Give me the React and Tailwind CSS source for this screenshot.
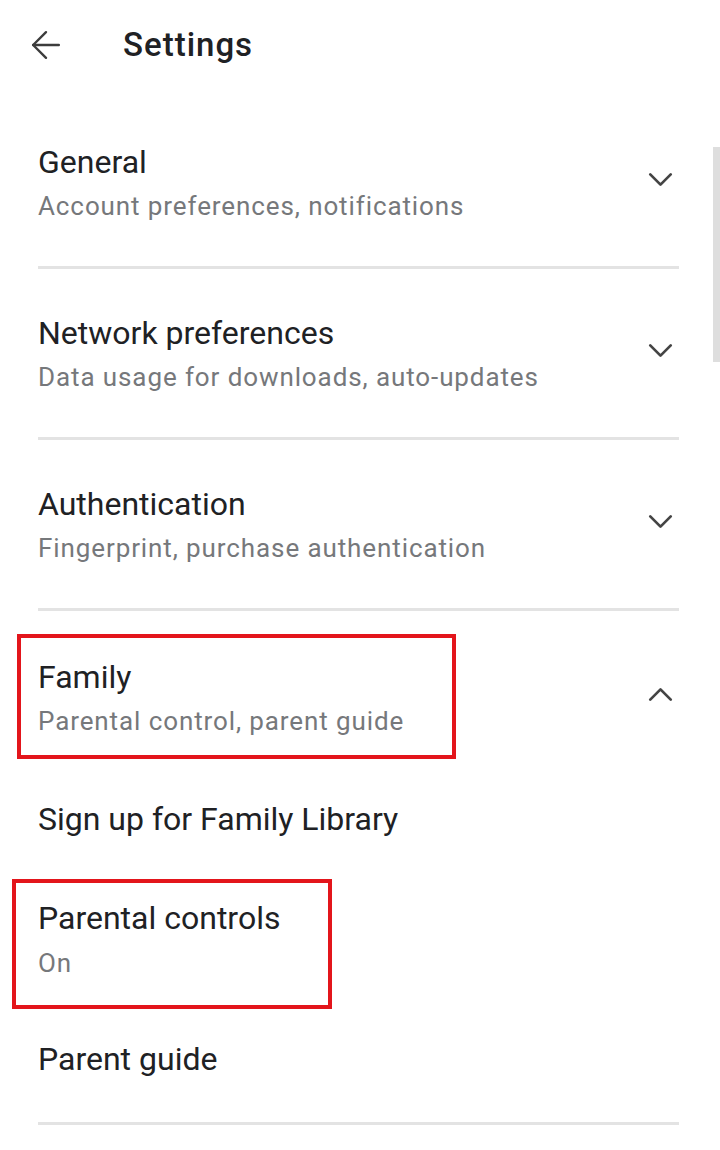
import { ArrowLeft, ChevronDown, ChevronUp } from 'lucide-react';

const SECTIONS = [
  { title: 'General', subtitle: 'Account preferences, notifications' },
  { title: 'Network preferences', subtitle: 'Data usage for downloads, auto-updates' },
  { title: 'Authentication', subtitle: 'Fingerprint, purchase authentication' },
];

const titleCls = 'text-[32px] leading-[40px] text-[#202124]';
const subCls = 'text-[26px] leading-[34px] tracking-[0.9px] text-[#76787b]';

function Divider() {
  return <div className="h-[3px] bg-[#e3e3e3]" />;
}

function SectionRow({ title, subtitle, open }) {
  return (
    <div className="flex items-center justify-between">
      <div>
        <div className={titleCls}>{title}</div>
        <div className={`mt-[7px] ${subCls}`}>{subtitle}</div>
      </div>
      <div className="-mr-[2px] -mt-[6px] text-[#444]">
        {open ? <ChevronUp size={41} strokeWidth={1.6} /> : <ChevronDown size={41} strokeWidth={1.6} />}
      </div>
    </div>
  );
}

export default function App() {
  return (
    <div
      className="relative w-[720px] h-[1150px] overflow-hidden bg-white"
      style={{ fontFamily: 'Roboto, "Liberation Sans", sans-serif' }}
    >
      {/* top bar */}
      <div className="flex items-center h-[90px] pl-[24px]">
        <ArrowLeft size={44} strokeWidth={1.3} className="text-[#3c3c3c]" />
        <h1 className="ml-[55px] text-[33px] leading-[40px] tracking-[1px] text-[#202124] font-medium">Settings</h1>
      </div>

      <div className="pl-[38px] pr-[41px] pt-[8px]">
        {SECTIONS.map((s) => (
          <div key={s.title}>
            <div className="pt-[44px] pb-[43px]">
              <SectionRow title={s.title} subtitle={s.subtitle} />
            </div>
            <Divider />
          </div>
        ))}

        {/* expanded Family group */}
        <div className="relative pt-[46px]">
          <SectionRow title="Family" subtitle="Parental control, parent guide" open />
          <div className="absolute left-[-21px] top-[23px] w-[439px] h-[125px] border-[4px] border-[#e3151b] pointer-events-none" />
        </div>

        <div className="mt-[61px]">
          <div className={titleCls}>Sign up for Family Library</div>

          <div className="relative mt-[59px]">
            <div className={titleCls}>Parental controls</div>
            <div className={`mt-[8px] ${subCls}`}>On</div>
            <div className="absolute left-[-26px] top-[-19px] w-[320px] h-[130px] border-[4px] border-[#e3151b] pointer-events-none" />
          </div>

          <div className={`mt-[59px] ${titleCls}`}>Parent guide</div>
        </div>

        <div className="mt-[43px]">
          <Divider />
        </div>
      </div>

      {/* scrollbar thumb */}
      <div className="absolute right-0 top-[147px] w-[7px] h-[215px] bg-[#dedede]" />
    </div>
  );
}
